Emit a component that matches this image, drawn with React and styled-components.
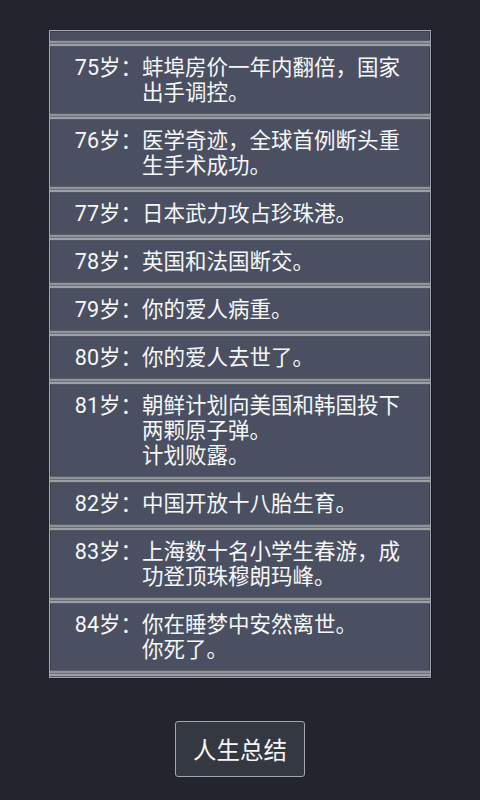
import styled, { createGlobalStyle } from 'styled-components'

const events = [
  { age: 75, text: '蚌埠房价一年内翻倍，国家出手调控。' },
  { age: 76, text: '医学奇迹，全球首例断头重生手术成功。' },
  { age: 77, text: '日本武力攻占珍珠港。' },
  { age: 78, text: '英国和法国断交。' },
  { age: 79, text: '你的爱人病重。' },
  { age: 80, text: '你的爱人去世了。' },
  { age: 81, text: '朝鲜计划向美国和韩国投下两颗原子弹。', extra: '计划败露。' },
  { age: 82, text: '中国开放十八胎生育。' },
  { age: 83, text: '上海数十名小学生春游，成功登顶珠穆朗玛峰。' },
  { age: 84, text: '你在睡梦中安然离世。', extra: '你死了。' },
]

const App = () => {
  return (
    <>
      <GlobalStyle />
      <Page>
        <Panel>
          <Peek />
          <Divider />
          {events.map((item) => (
            <div key={item.age}>
              <Row>
                <Age>{item.age}岁：</Age>
                <Text>
                  <p>{item.text}</p>
                  {item.extra && <p>{item.extra}</p>}
                </Text>
              </Row>
              <Divider />
            </div>
          ))}
        </Panel>
        <SummaryButton>人生总结</SummaryButton>
      </Page>
    </>
  )
}

export default App

const GlobalStyle = createGlobalStyle`
  html, body {
    margin: 0;
    padding: 0;
    background: #22252d;
  }
  body {
    font-family: Roboto, "Noto Sans CJK SC", "Noto Sans", sans-serif;
    color: #f6f7f8;
  }
`

const Page = styled.div`
  width: 480px;
  height: 800px;
  display: flex;
  flex-direction: column;
  align-items: center;
  padding-top: 30px;
  box-sizing: border-box;
  overflow: hidden;
`

const Panel = styled.div`
  width: 382px;
  box-sizing: border-box;
  background: #4a5061;
  border: 1px solid #a3a6ac;
  box-shadow: inset 0 0 0 1px #3c404b, 1px 1px 0 #16181d;
  overflow: hidden;
`

const Peek = styled.div`
  height: 9px;
`

const Divider = styled.div`
  height: 7px;
  background: linear-gradient(
    to bottom,
    #5b5f69 0,
    #5b5f69 1px,
    #8f939b 1px,
    #8f939b 3px,
    #6a6e77 3px,
    #6a6e77 4px,
    #9c9fa6 4px,
    #9c9fa6 6px,
    #545862 6px
  );
`

const Row = styled.div`
  display: grid;
  grid-template-columns: 92px 260px;
  padding: 8px 0;
  font-size: 21.5px;
  line-height: 25px;
`

const Age = styled.span`
  text-align: right;
  white-space: nowrap;
`

const Text = styled.div`
  p {
    margin: 0;
  }
`

const SummaryButton = styled.button`
  margin-top: 43px;
  height: 56px;
  padding: 0 17px;
  background: #343841;
  border: 1px solid #a4a6aa;
  border-radius: 3px;
  color: #f6f6f6;
  font-family: "Noto Sans CJK SC", sans-serif;
  font-size: 23.5px;
`
